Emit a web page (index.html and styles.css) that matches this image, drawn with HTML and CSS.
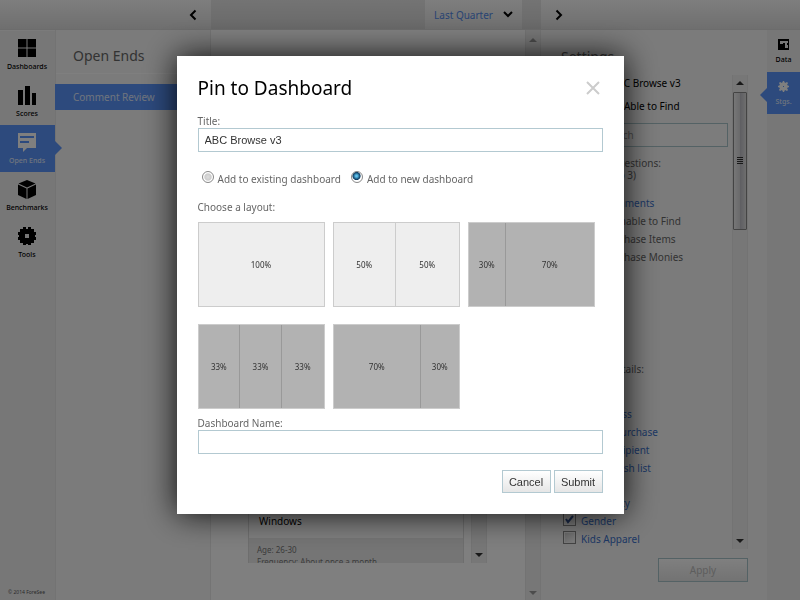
FILE: index.html
```html
<!DOCTYPE html>
<html lang="en">
<head>
<meta charset="utf-8">
<title>Pin to Dashboard</title>
<link rel="stylesheet" href="styles.css">
</head>
<body>
<div class="app">
  <header class="topbar">
    <div class="topbar-left">
      <button class="icon-button" aria-label="Collapse menu"><svg width="8" height="12" viewBox="0 0 8 12"><path d="M6.500 1.500L2 6l4.500 4.500" fill="none" stroke="#000" stroke-width="2"/></svg></button>
    </div>
    <div class="topbar-main">
      <button class="period">Last Quarter <svg width="10" height="7" viewBox="0 0 10 7"><path d="M1 1l4 4 4-4" fill="none" stroke="#000" stroke-width="2"/></svg></button>
    </div>
    <div class="topbar-right">
      <button class="icon-button" aria-label="Collapse settings"><svg width="8" height="12" viewBox="0 0 8 12"><path d="M1.500 1.500L6 6l-4.500 4.500" fill="none" stroke="#000" stroke-width="2"/></svg></button>
    </div>
  </header>

  <div class="workspace">
    <nav class="nav">
      <a class="nav-item" href="#"><svg width="18" height="18" viewBox="0 0 18 18"><path d="M0 0h8.500v8.500H0zM9.500 0H18v8.500H9.500zM0 9.500h8.500V18H0zM9.500 9.500H18V18H9.500z"/></svg>Dashboards</a>
      <a class="nav-item" href="#"><svg width="18" height="18" viewBox="0 0 18 18"><path d="M0 4h5v15H0zM7 0h5v19H7zM14 7h4v12h-4z"/></svg>Scores</a>
      <a class="nav-item active" href="#"><svg width="18" height="18" viewBox="0 0 18 18"><path fill-rule="evenodd" d="M0 0h18v15H9l-4 4v-4H0zM2 3v2h14V3zM2 8v2h9V8z"/></svg>Open Ends</a>
      <a class="nav-item" href="#"><svg width="18" height="18" viewBox="0 0 18 18"><path d="M9 0l8.500 3.500L9 7.500.500 3.500zM0 4.500l8.500 4V19L0 15zM18 4.500l-8.500 4V19l8.500-4z"/></svg>Benchmarks</a>
      <a class="nav-item" href="#"><svg width="18" height="18" viewBox="0 0 18 18"><path fill-rule="evenodd" d="M5 0h3v2h2V0h3v2h3v3h2v3h-1v2h1v3h-2v3h-3v2h-3v-1H8v1H5v-2H2v-3H0v-3h1V8H0V5h2V2h3zM7 7v4h4V7z"/></svg>Tools</a>
      <small class="copyright">© 2014 ForeSee</small>
    </nav>

    <aside class="submenu">
      <h2 class="panel-title">Open Ends</h2>
      <a class="submenu-item" href="#">Comment Review</a>
    </aside>

    <main class="content">
      <div class="comments">
        <article class="comment">
          <p class="comment-text">Windows</p>
          <p class="comment-meta">Age: 26-30<br>Frequency: About once a month</p>
        </article>
        <div class="scrollbar"><span class="arrow-down"></span></div>
      </div>
    </main>
    <div class="scrollbar faded page-scroll"><span class="arrow-up"></span><span class="arrow-down"></span></div>

    <aside class="settings">
      <h2 class="settings-title">Settings</h2>
      <div class="settings-body">
        <div class="settings-list">
          <p class="choice">Browse: ABC Browse v3</p>
          <p class="choice">Questions: Able to Find</p>
          <input class="search" type="text" placeholder="Search" aria-label="Search">
          <p class="caption">Open-end Questions:<br>(choose up to 3)</p>
          <ul class="questions">
            <li><a href="#">Comments</a></li>
            <li>If Unable to Find</li>
            <li>Purchase Items</li>
            <li>Purchase Monies</li>
          </ul>
          <p class="caption">Response Details:</p>
          <div class="details">
            <label><input type="checkbox">Awareness</label>
            <label><input type="checkbox">Online purchase</label>
            <label><input type="checkbox">A gift recipient</label>
            <label><input type="checkbox">Gift or wish list</label>
          </div>
          <div class="details">
            <label><input type="checkbox">Frequency</label>
            <label><input type="checkbox" checked>Gender</label>
            <label><input type="checkbox">Kids Apparel</label>
            <label><input type="checkbox" aria-label="More"></label>
          </div>
        </div>
        <div class="scrollbar"><span class="arrow-up"></span><span class="thumb"><i class="grip"></i></span><span class="arrow-down"></span></div>
      </div>
      <button class="apply" disabled>Apply</button>
    </aside>

    <nav class="rail">
      <a class="rail-item" href="#"><svg width="11" height="11" viewBox="0 0 11 11"><path fill-rule="evenodd" d="M0 0h11v11H0zM2 2v3h3v-1h2v5h3V6H9V4h1V2z"/></svg>Data</a>
      <a class="rail-item active" href="#"><svg width="11" height="11" viewBox="0 0 11 11"><path fill-rule="evenodd" d="M4 2l1-2h1l1 2 2-1 1 1-1 2 2 1v1l-2 1 1 2-1 1-2-1-1 2H5L4 9l-2 1-1-1 1-2-2-1V5l2-1-1-2 1-1zM5 5v1h1V5z"/></svg>Stgs.</a>
    </nav>
  </div>
</div>

<div class="overlay">
  <form class="dialog" role="dialog" aria-labelledby="dialog-title">
    <div class="dialog-head">
      <h1 id="dialog-title">Pin to Dashboard</h1>
      <button class="close" type="button" aria-label="Close"><svg width="14" height="14" viewBox="0 0 14 14"><path d="M1 1l12 12M13 1L1 13" stroke="#ccc" stroke-width="2"/></svg></button>
    </div>
    <label class="field-label" for="title">Title:</label>
    <input class="field" id="title" type="text" value="ABC Browse v3">
    <div class="targets">
      <label><input type="radio" name="target">Add to existing dashboard</label>
      <label><input type="radio" name="target" checked>Add to new dashboard</label>
    </div>
    <p class="field-label">Choose a layout:</p>
    <div class="layouts">
      <button class="layout one" type="button"><span>100%</span></button>
      <button class="layout halves" type="button"><span>50%</span><span>50%</span></button>
      <button class="layout dark narrow-wide" type="button"><span>30%</span><span>70%</span></button>
      <button class="layout dark thirds" type="button"><span>33%</span><span>33%</span><span>33%</span></button>
      <button class="layout dark wide-narrow" type="button"><span>70%</span><span>30%</span></button>
    </div>
    <label class="field-label" for="name">Dashboard Name:</label>
    <input class="field" id="name" type="text">
    <div class="actions">
      <button class="action" type="button">Cancel</button>
      <button class="action" type="submit">Submit</button>
    </div>
  </form>
</div>
</body>
</html>
```
FILE: styles.css
```css
* { box-sizing: border-box; }
html, body { height: 100%; margin: 0; }
body {
  overflow: hidden;
  font: 10px/12px "Noto Sans", "Open Sans", sans-serif;
  color: #666;
  background: #f6f6f6;
}
h1, h2, p, ul { margin: 0; padding: 0; font-weight: 400; }
ul { list-style: none; }
a { color: inherit; text-decoration: none; }
button, input { font: inherit; margin: 0; border-radius: 0; }

.app { display: flex; flex-direction: column; height: 100%; }

.topbar {
  display: flex;
  flex: 0 0 30px;
  background: linear-gradient(#fcfcfc, #dedede);
  border-bottom: 1px solid #d8d8d8;
}
.topbar-left {
  display: flex;
  flex: 0 0 211px;
  justify-content: flex-end;
  align-items: center;
  padding-right: 11px;
}
.topbar-main {
  display: flex;
  flex: 1;
  justify-content: flex-end;
  padding-right: 19px;
  background: linear-gradient(#e8e8e8, #d2d2d2);
}
.topbar-right {
  display: flex;
  flex: 0 0 259px;
  align-items: center;
  padding-left: 11px;
}
.icon-button { display: flex; padding: 0 3px; border: 0; background: none; }
.period {
  display: flex;
  align-items: center;
  gap: 10px;
  padding: 0 9px;
  border: 0;
  color: #5087e6;
  background: linear-gradient(#fcfcfc, #dedede);
}

.workspace { display: flex; flex: 1; min-height: 0; }
.nav {
  display: flex;
  flex: 0 0 55px;
  flex-direction: column;
  background: #efefef;
  border-top: 1px solid #f6f6f6;
  z-index: 1;
}
.nav-item {
  position: relative;
  display: flex;
  flex-direction: column;
  align-items: center;
  gap: 4px;
  height: 47px;
  padding: 8px 1px 0 0;
  font-size: 7px;
  font-weight: 500;
  color: #000;
  fill: #000;
}
.nav-item svg { overflow: visible; }
.active { color: #dfe8fa; fill: #fff; background: #5a94fa; }
.nav-item.active::after, .rail-item.active::before {
  content: "";
  position: absolute;
  top: 16px;
  left: 100%;
  border: 7px solid transparent;
  border-left-color: #5a94fa;
  border-right-width: 0;
}
.copyright { margin: auto 0 2px 8px; font-size: 5px; color: #555; white-space: nowrap; }

.submenu { flex: 0 0 156px; border-right: 1px solid #e8e8e8; border-left: 1px solid #e6e6e6; }
.panel-title {
  padding: 17px 17px 16px;
  border-bottom: 1px solid #fff;
  font-size: 14px;
  line-height: 18px;
  height: 44px;
}
.submenu-item {
  display: block;
  margin: 10px 0 0 -1px;
  padding: 7px 18px;
  color: #dfe8fa;
  background: #5a94fa;
}

.content {
  display: flex;
  flex: 1;
  align-items: flex-end;
  min-width: 0;
  padding: 0 38px 37px 37px;
  background: #fff;
}
.comments { display: flex; flex: 1; gap: 7px; height: 62px; overflow: hidden; }
.comment { flex: 1; border: solid #ddd; border-width: 0 1px; }
.comment-text { height: 37px; padding: 14px 10px 0; color: #000; }
.comment-meta { padding: 6px 8px 0; font-size: 8px; line-height: 12px; color: #777; background: #eaeaea; white-space: nowrap; }

.scrollbar {
  display: flex;
  flex: 0 0 16px;
  flex-direction: column;
  align-items: center;
  padding: 6px 0;
  background: #eee;
  border: solid #e6e6e6;
  border-width: 0 1px;
}
.page-scroll { padding: 8px 0 5px; }
.arrow-up { border: 4px solid transparent; border-bottom-color: #333; border-top-width: 0; }
.arrow-down { margin-top: auto; border: 4px solid transparent; border-top-color: #333; border-bottom-width: 0; }
.faded .arrow-up { border-bottom-color: #999; }
.faded .arrow-down { border-top-color: #999; }
.thumb {
  display: flex;
  align-items: center;
  justify-content: center;
  width: 14px;
  height: 138px;
  margin-top: 7px;
  border: 1px solid #888;
  border-radius: 1px;
  background: linear-gradient(90deg, #eee, #d4d4d6 50%, #bcbcc4 51%, #ddd);
}
.grip { width: 6px; height: 8px; background: repeating-linear-gradient(#333 0 1px, transparent 1px 2px); }

.settings {
  display: flex;
  flex: 0 0 226px;
  flex-direction: column;
  padding: 18px 19px 18px 20px;
}
.settings-title { font-size: 14px; line-height: 18px; margin-bottom: 9px; }
.settings-body { display: flex; flex: 1; gap: 4px; min-height: 0; margin-bottom: 9px; }
.settings-list { flex: 1; min-width: 0; overflow: hidden; }
.choice { margin-bottom: 11px; padding-left: 10px; color: #000; }
.choice:first-child { margin-top: 2px; }
.search {
  width: 100%;
  height: 24px;
  padding: 0 40px;
  border: 1px solid #a9c5ca;
  background: #f9f9f9;
}
.search::placeholder { color: #999; }
.caption { margin-top: 10px; }
.questions { margin: 13px 0 97px 42px; }
.questions li, .details label { display: flex; align-items: center; gap: 5px; height: 18px; }
.questions a, .details { color: #3b72cc; }
.details { margin: 30px 0 17px 2px; }
.details + .details { margin-top: 17px; }
.details input {
  appearance: none;
  width: 13px;
  height: 13px;
  margin-bottom: 4px;
  border: 1px solid #888;
  background: linear-gradient(135deg, #ccc, #fff);
  box-shadow: inset 0 0 0 1px #f4f4f4;
}
.details input:checked {
  background: url("data:image/svg+xml,%3Csvg xmlns='http://www.w3.org/2000/svg' viewBox='0 0 11 11'%3E%3Cpath d='M2 5l2 3 5-6' fill='none' stroke='%2331508f' stroke-width='2'/%3E%3C/svg%3E") #eee;
}
.apply {
  align-self: flex-end;
  width: 90px;
  height: 24px;
  border: 1px solid #a9c5ca;
  color: #bbb;
  background: linear-gradient(#fff, #e6e6e6);
}

.rail { flex: 0 0 33px; background: #efefef; }
.rail-item {
  position: relative;
  display: flex;
  flex-direction: column;
  align-items: center;
  gap: 4px;
  height: 42px;
  padding-top: 9px;
  font-size: 7px;
  font-weight: 500;
  color: #000;
  fill: #000;
}
.rail-item.active { color: #dfe8fa; fill: #fff; }
.rail-item.active::before {
  right: 100%;
  left: auto;
  border-width: 7px 7px 7px 0;
  border-color: transparent #5a94fa;
}

.overlay {
  position: fixed;
  inset: 0;
  z-index: 5;
  display: flex;
  justify-content: center;
  align-items: flex-start;
  padding-top: 56px;
  background: rgba(0, 0, 0, .5);
}
.dialog {
  width: 447px;
  padding: 20px 21px 21px;
  background: #fff;
  box-shadow: 0 0 30px rgba(0, 0, 0, .9);
}
.dialog-head { display: flex; justify-content: space-between; align-items: center; margin-bottom: 15px; }
.dialog-head h1 { font-size: 19px; line-height: 24px; color: #000; }
.close { display: flex; padding: 3px; border: 0; background: none; }
.field-label { display: block; line-height: 13px; }
.field {
  display: block;
  width: 100%;
  height: 24px;
  padding: 0 6px;
  border: 1px solid #b3c9d1;
  font: 11px "Liberation Sans", sans-serif;
  color: #333;
}
.targets { display: flex; gap: 10px; margin: 19px 4px 13px; }
.targets label { display: flex; align-items: flex-start; gap: 4px; line-height: 17px; }
.targets input {
  appearance: none;
  width: 12px;
  height: 12px;
  border: 1px solid #888;
  border-radius: 50%;
  background: radial-gradient(#ddd, #ccc 45%, #fff 60%);
}
.targets input:checked { background: radial-gradient(circle at 45% 40%, #5fc3ee 10%, #0b3a60 45%, #fff 55%); }
.layouts {
  display: grid;
  grid-template-columns: repeat(3, 127px);
  gap: 17px 8px;
  margin: 8px 0;
}
.layout {
  display: grid;
  height: 85px;
  padding: 0;
  border: 1px solid #ccc;
  font-size: 8px;
  color: #333;
  background: #eee;
}
.layout span { display: flex; align-items: center; justify-content: center; height: 100%; }
.layout span:not(:last-child) { border-right: 1px solid #ccc; }
.dark { background: #b2b2b2; }
.dark span:not(:last-child) { border-color: #999; }
.halves { grid-template-columns: 1fr 1fr; }
.narrow-wide { grid-template-columns: 3fr 7fr; }
.wide-narrow { grid-template-columns: 7fr 3fr; }
.thirds { grid-template-columns: 1fr 1fr 1fr; }
.actions { display: flex; justify-content: flex-end; gap: 3px; margin-top: 16px; }
.action {
  min-width: 49px;
  height: 23px;
  padding: 0 6px;
  border: 1px solid #b3c9d1;
  font: 11px "Liberation Sans", sans-serif;
  color: #333;
  background: linear-gradient(#fff, #e6e6e6);
}
```
